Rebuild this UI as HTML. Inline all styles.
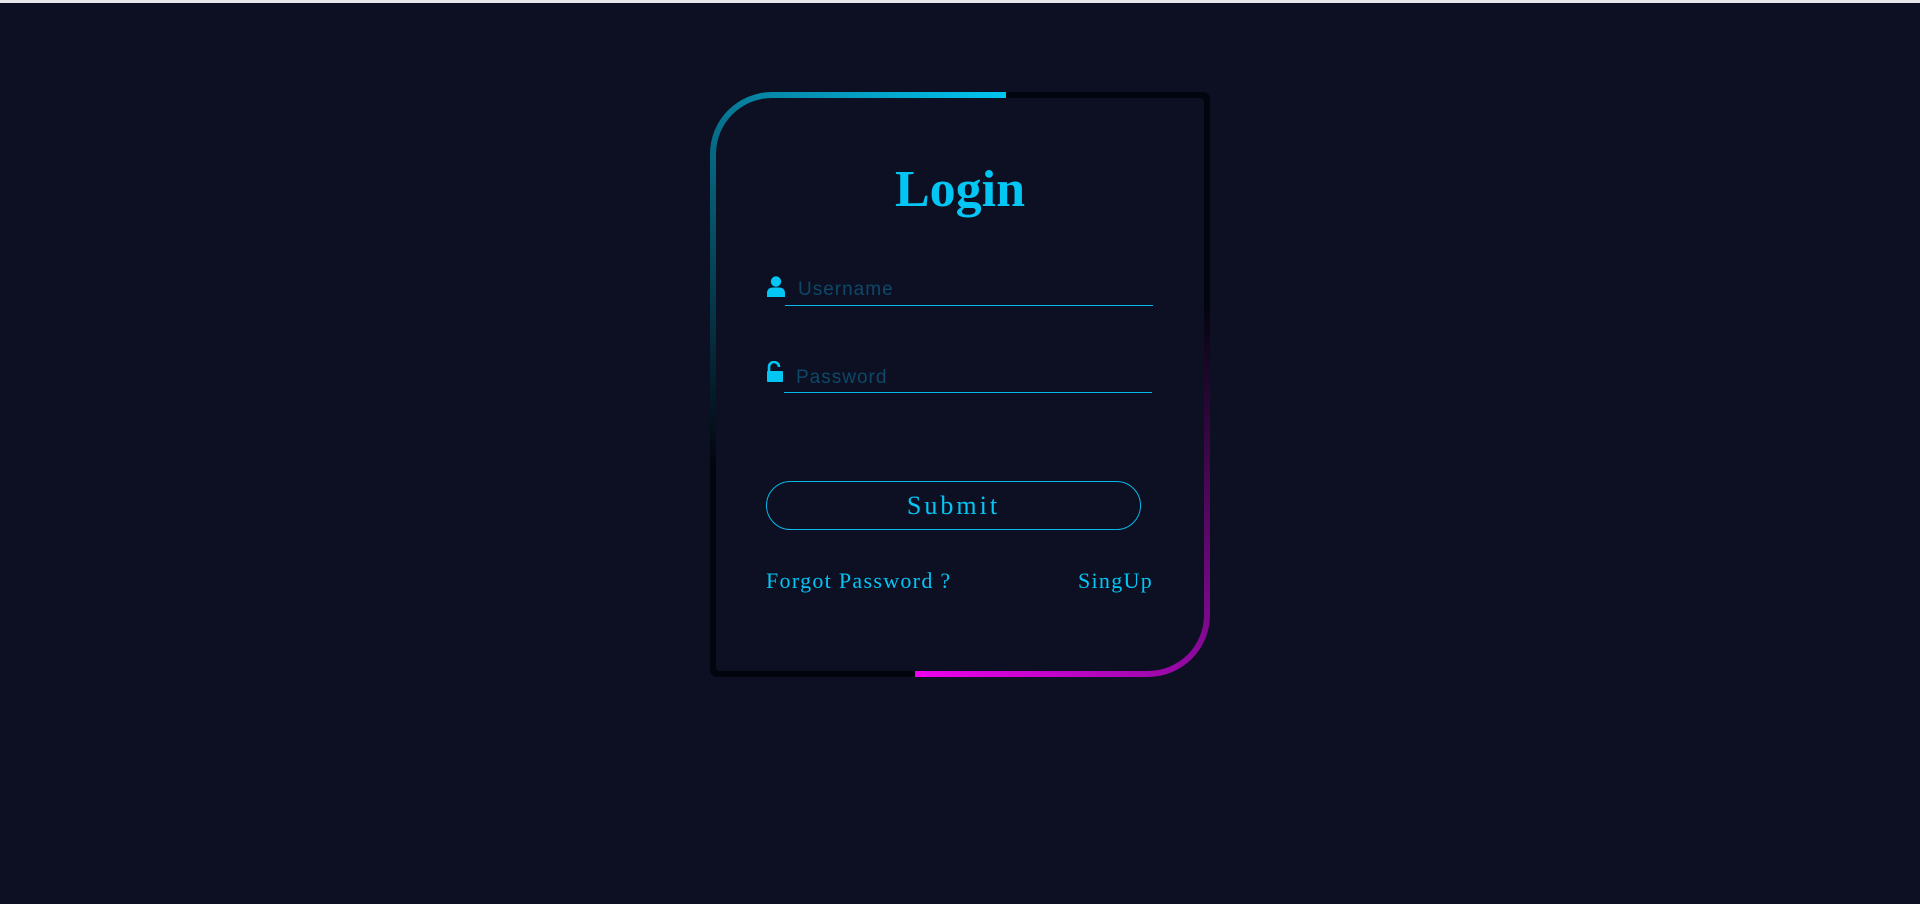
<!DOCTYPE html>
<html><head><meta charset="utf-8"><style>
*{margin:0;padding:0;box-sizing:border-box}
html,body{width:1920px;height:904px;overflow:hidden;background:#0c1022}
.topline{position:absolute;left:0;top:0;width:1920px;height:3px;background:#e6e6ea}
.card{position:absolute;left:710px;top:92px;width:500px;height:585px;border-radius:62px 7px 62px 7px;overflow:hidden;background:#03050e}
.tl{position:absolute;left:0;top:0;width:296px;height:373px;background:linear-gradient(to bottom,rgba(3,5,14,0) 0%,#03050e 100%),linear-gradient(to right,#087a98,#00c6f2)}
.br{position:absolute;right:0;bottom:0;width:295px;height:371px;background:linear-gradient(to top,rgba(3,5,14,0) 0%,#03050e 100%),linear-gradient(to right,#f000f0,#900aa0)}
.inner{position:absolute;left:6px;top:6px;right:6px;bottom:6px;background:#0c1022;border-radius:56px 4px 56px 4px}
.abs{position:absolute}
.title{left:0;width:1920px;top:160px;text-align:center;font:bold 52px "Liberation Serif",serif;color:#03c6f5}
.line{height:1px;background:#08b8e8}
.ph{font:19px "Liberation Sans",sans-serif;color:#0e4868;letter-spacing:1px}
.btn{left:766px;top:481px;width:375px;height:49px;border:1px solid #08b8e8;border-radius:25px;text-align:center;font:26px/47px "Liberation Serif",serif;color:#03c6f5;letter-spacing:3px}
.lnk{font:22px "Liberation Serif",serif;color:#03c6f5;letter-spacing:1.3px}
</style></head><body>
<div class="topline"></div>
<div class="card"><div class="tl"></div><div class="br"></div><div class="inner"></div></div>
<div class="abs title">Login</div>
<svg class="abs" style="left:766px;top:276px" width="20" height="22" viewBox="0 0 20 22"><circle cx="10" cy="5.5" r="5.2" fill="#03c6f5"/><path d="M1 21 V17 C1 13 4 11.5 7 11.5 H13 C16 11.5 19 13 19 17 V21 Z" fill="#03c6f5"/></svg>
<div class="abs ph" style="left:798px;top:279px">Username</div>
<div class="abs line" style="left:785px;top:305px;width:368px"></div>
<svg class="abs" style="left:766px;top:361px" width="18" height="22" viewBox="0 0 18 22"><path d="M3 10 V6 A5 5 0 0 1 13 6" fill="none" stroke="#03c6f5" stroke-width="2.6"/><rect x="1" y="10" width="16" height="11" rx="1" fill="#03c6f5"/></svg>
<div class="abs ph" style="left:796px;top:367px">Password</div>
<div class="abs line" style="left:784px;top:392px;width:368px"></div>
<div class="abs btn">Submit</div>
<div class="abs lnk" style="left:766px;top:568px">Forgot Password ?</div>
<div class="abs lnk" style="right:767px;top:568px">SingUp</div>
</body></html>
